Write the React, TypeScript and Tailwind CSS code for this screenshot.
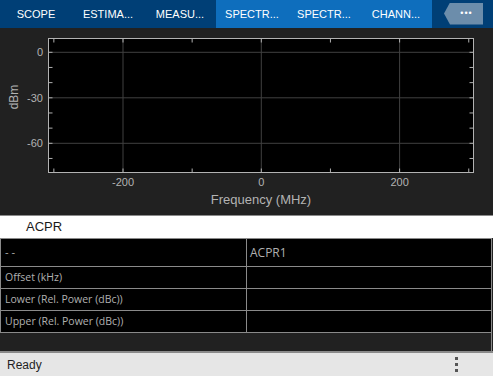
import React from "react";

const tabs = [
  { label: "SCOPE", active: false },
  { label: "ESTIMA...", active: false },
  { label: "MEASU...", active: false },
  { label: "SPECTR...", active: true },
  { label: "SPECTR...", active: true },
  { label: "CHANN...", active: true },
];

const rows = ["Offset (kHz)", "Lower (Rel. Power (dBc))", "Upper (Rel. Power (dBc))"];

// plot geometry (svg coordinates)
const L = 48.5;
const R = 473.5;
const T = 10.5;
const B = 144.5;
const y0 = 24.3;
const dbPx = 45.5 / 30;
const x0 = 261.3;
const mhzPx = 138.3 / 200;

const yOf = (db: number) => y0 - db * dbPx;
const xOf = (f: number) => x0 + f * mhzPx;

const Plot = () => {
  const dbTicks = [0, -10, -20, -30, -40, -50, -60, -70];
  const fTicks = [-300, -200, -100, 0, 100, 200, 300];
  return (
    <svg width={493} height={187} className="block">
      <rect x={L} y={T} width={R - L} height={B - T} fill="#000" />
      {[0, -30, -60].map((d) => (
        <line key={d} x1={L} x2={R} y1={yOf(d)} y2={yOf(d)} stroke="#404040" strokeWidth={1} />
      ))}
      {[-200, 0, 200].map((f) => (
        <line key={f} x1={xOf(f)} x2={xOf(f)} y1={T} y2={B} stroke="#404040" strokeWidth={1} />
      ))}
      {dbTicks.map((d) => (
        <g key={d}>
          <line x1={L} x2={L + 4} y1={yOf(d)} y2={yOf(d)} stroke="#b0b0b0" />
          <line x1={R - 4} x2={R} y1={yOf(d)} y2={yOf(d)} stroke="#b0b0b0" />
        </g>
      ))}
      {fTicks.map((f) => (
        <g key={f}>
          <line x1={xOf(f)} x2={xOf(f)} y1={T} y2={T + 4} stroke="#b0b0b0" />
          <line x1={xOf(f)} x2={xOf(f)} y1={B - 4} y2={B} stroke="#b0b0b0" />
        </g>
      ))}
      <rect x={L} y={T} width={R - L} height={B - T} fill="none" stroke="#b3b3b3" strokeWidth={1} />
      {[0, -30, -60].map((d) => (
        <text key={d} x={43} y={yOf(d) + 4} textAnchor="end" fontSize={11} fill="#b3b3b3">
          {d}
        </text>
      ))}
      {[-200, 0, 200].map((f) => (
        <text key={f} x={xOf(f)} y={158} textAnchor="middle" fontSize={11} fill="#b3b3b3">
          {f}
        </text>
      ))}
      <text x={261} y={175.5} textAnchor="middle" fontSize={13} fill="#b3b3b3">
        Frequency (MHz)
      </text>
      <text x={18} y={69} textAnchor="middle" fontSize={12} fill="#b3b3b3" transform="rotate(-90 18 69)">
        dBm
      </text>
    </svg>
  );
};

export default function App() {
  return (
    <div
      className="w-[493px] h-[376px] overflow-hidden flex flex-col bg-[#212121]"
      style={{ fontFamily: "'Liberation Sans', Arial, sans-serif" }}
    >
      <div className="flex h-[28px] bg-[#003f76] shrink-0">
        {tabs.map((t, i) => (
          <div
            key={i}
            className={`w-[72px] flex items-center justify-center text-[11px] text-white ${
              t.active ? "bg-[#0e6ebd]" : ""
            }`}
          >
            {t.label}
          </div>
        ))}
        <div className="flex-1 flex items-center justify-end pr-[10px] pb-[1px]">
          <div
            className="w-[39px] h-[22px] bg-[#6c8dab] flex items-center justify-center pl-[6px]"
            style={{ clipPath: "polygon(0 50%, 6px 0, 100% 0, 100% 100%, 6px 100%)" }}
          >
            <span className="text-white text-[9px] tracking-[1px] leading-none">•••</span>
          </div>
        </div>
      </div>

      <Plot />

      <div className="border-t border-[#8a8a8a] bg-white h-[23px] flex items-center pl-[26px] text-[13px] text-[#1a1a1a]">
        ACPR
      </div>

      <div
        className="bg-black border-t border-l border-r border-[#8a8a8a] mr-[1px]"
        style={{ fontFamily: "'Open Sans', 'Noto Sans', sans-serif" }}
      >
        <div className="flex h-[28px] border-b border-[#8a8a8a]">
          <div className="w-[246px] border-r border-[#8a8a8a] flex items-center pl-[4px] text-[11px] text-[#b0b0b0]">
            - -
          </div>
          <div className="flex-1 flex items-center pl-[3px] text-[12px] font-medium text-[#b0b0b0]">ACPR1</div>
        </div>
        {rows.map((r) => (
          <div key={r} className="flex h-[22px] border-b border-[#8a8a8a]">
            <div className="w-[246px] border-r border-[#8a8a8a] flex items-center pl-[4px] text-[10.5px] text-[#b0b0b0]">
              {r}
            </div>
            <div className="flex-1" />
          </div>
        ))}
      </div>

      <div className="flex-1 bg-[#212121] border-r border-[#8a8a8a] mr-[1px]" />

      <div className="h-[25px] border-t-2 border-[#8a8a8a] bg-[#e6e6e6] flex items-center justify-between shrink-0">
        <span className="pl-[7px] text-[12px] text-[#1f1f1f]">Ready</span>
        <div className="flex flex-col gap-[3px] mr-[35px]">
          <span className="w-[3px] h-[3px] bg-[#555]" />
          <span className="w-[3px] h-[3px] bg-[#555]" />
          <span className="w-[3px] h-[3px] bg-[#555]" />
        </div>
      </div>
    </div>
  );
}
